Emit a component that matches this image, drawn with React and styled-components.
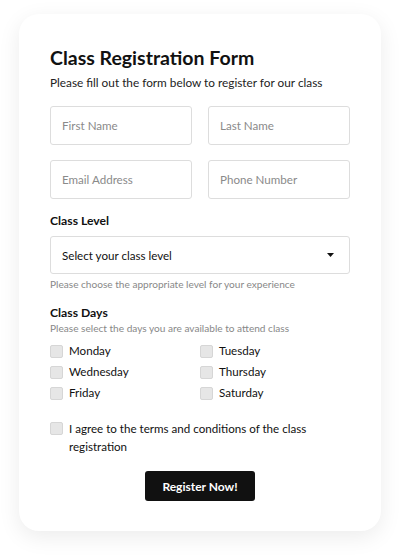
import React from "react";
import styled, { createGlobalStyle } from "styled-components";

const Global = createGlobalStyle`
  html, body { margin: 0; padding: 0; background: #fff; }
  body { font-family: Lato, "Noto Sans", sans-serif; color: #111; }
  * { box-sizing: border-box; }
`;

const Page = styled.div`
  padding: 14px 19px 24px;
`;

const Card = styled.form`
  background: #fff;
  border-radius: 20px;
  box-shadow: 0 6px 22px rgba(0,0,0,0.08);
  padding: 30px 31px 30px;
  display: flex;
  flex-direction: column;
`;

const Title = styled.h1`
  margin: 0;
  font-size: 19.5px;
  font-weight: 700;
  line-height: 28px;
  color: #111;
`;

const Subtitle = styled.p`
  margin: 1px 0 0;
  font-size: 11.8px;
  line-height: 20px;
  color: #222;
`;

const Grid = styled.div`
  display: grid;
  grid-template-columns: 1fr 1fr;
  column-gap: 16px;
  row-gap: 15px;
  margin-top: 13px;
`;

const Input = styled.input`
  height: 39px;
  border: 1px solid #ddd;
  border-radius: 3px;
  padding: 0 11px;
  font: inherit;
  font-size: 11.6px;
  color: #111;
  outline: none;
  width: 100%;
  &::placeholder { color: #8a8a8a; }
`;

const Label = styled.div`
  font-size: 12.2px;
  font-weight: 700;
  line-height: 18px;
  margin-top: ${p => p.$mt}px;
`;

const Select = styled.div`
  margin-top: 6px;
  height: 38px;
  border: 1px solid #ddd;
  border-radius: 3px;
  padding: 0 15px 0 11px;
  display: flex;
  align-items: center;
  justify-content: space-between;
  font-size: 11.6px;
  color: #111;
`;

const Help = styled.div`
  font-size: 10.1px;
  color: #888;
  line-height: ${p => p.$lh}px;
  margin-top: ${p => p.$mt}px;
`;

const Days = styled.div`
  display: grid;
  grid-template-columns: 1fr 1fr;
  row-gap: 3px;
  margin-top: 7px;
`;

const CheckRow = styled.label`
  display: flex;
  align-items: ${p => (p.$top ? "flex-start" : "center")};
  gap: 6px;
  font-size: 11.6px;
  line-height: 18px;
  color: #111;
`;

const Box = styled.span`
  flex: none;
  width: 13px;
  height: 13px;
  border: 1px solid #d6d6d6;
  background: #e6e6e6;
  border-radius: 2px;
  margin-top: ${p => (p.$top ? "2px" : "0")};
`;

const Agree = styled.div`
  margin-top: 18px;
`;

const ButtonWrap = styled.div`
  display: flex;
  justify-content: center;
  margin-top: 15px;
`;

const Button = styled.button`
  width: 110px;
  height: 30px;
  background: #111;
  color: #fff;
  border: none;
  border-radius: 3px;
  font: inherit;
  font-size: 12px;
  font-weight: 700;
`;

const Caret = () => (
  <svg width="7" height="4" viewBox="0 0 7 4"><path d="M0 0h7L3.5 4z" fill="#111" /></svg>
);

const Check = ({ children, top }) => (
  <CheckRow $top={top}><Box $top={top} /><span>{children}</span></CheckRow>
);

export default function App() {
  return (
    <>
      <Global />
      <Page>
        <Card onSubmit={e => e.preventDefault()}>
          <Title>Class Registration Form</Title>
          <Subtitle>Please fill out the form below to register for our class</Subtitle>
          <Grid>
            <Input placeholder="First Name" />
            <Input placeholder="Last Name" />
            <Input placeholder="Email Address" />
            <Input placeholder="Phone Number" />
          </Grid>
          <Label $mt={13}>Class Level</Label>
          <Select><span>Select your class level</span><Caret /></Select>
          <Help $mt={3} $lh={15}>Please choose the appropriate level for your experience</Help>
          <Label $mt={12}>Class Days</Label>
          <Help $mt={0} $lh={13}>Please select the days you are available to attend class</Help>
          <Days>
            <Check>Monday</Check>
            <Check>Tuesday</Check>
            <Check>Wednesday</Check>
            <Check>Thursday</Check>
            <Check>Friday</Check>
            <Check>Saturday</Check>
          </Days>
          <Agree>
            <Check top>I agree to the terms and conditions of the class registration</Check>
          </Agree>
          <ButtonWrap><Button type="submit">Register Now!</Button></ButtonWrap>
        </Card>
      </Page>
    </>
  );
}
